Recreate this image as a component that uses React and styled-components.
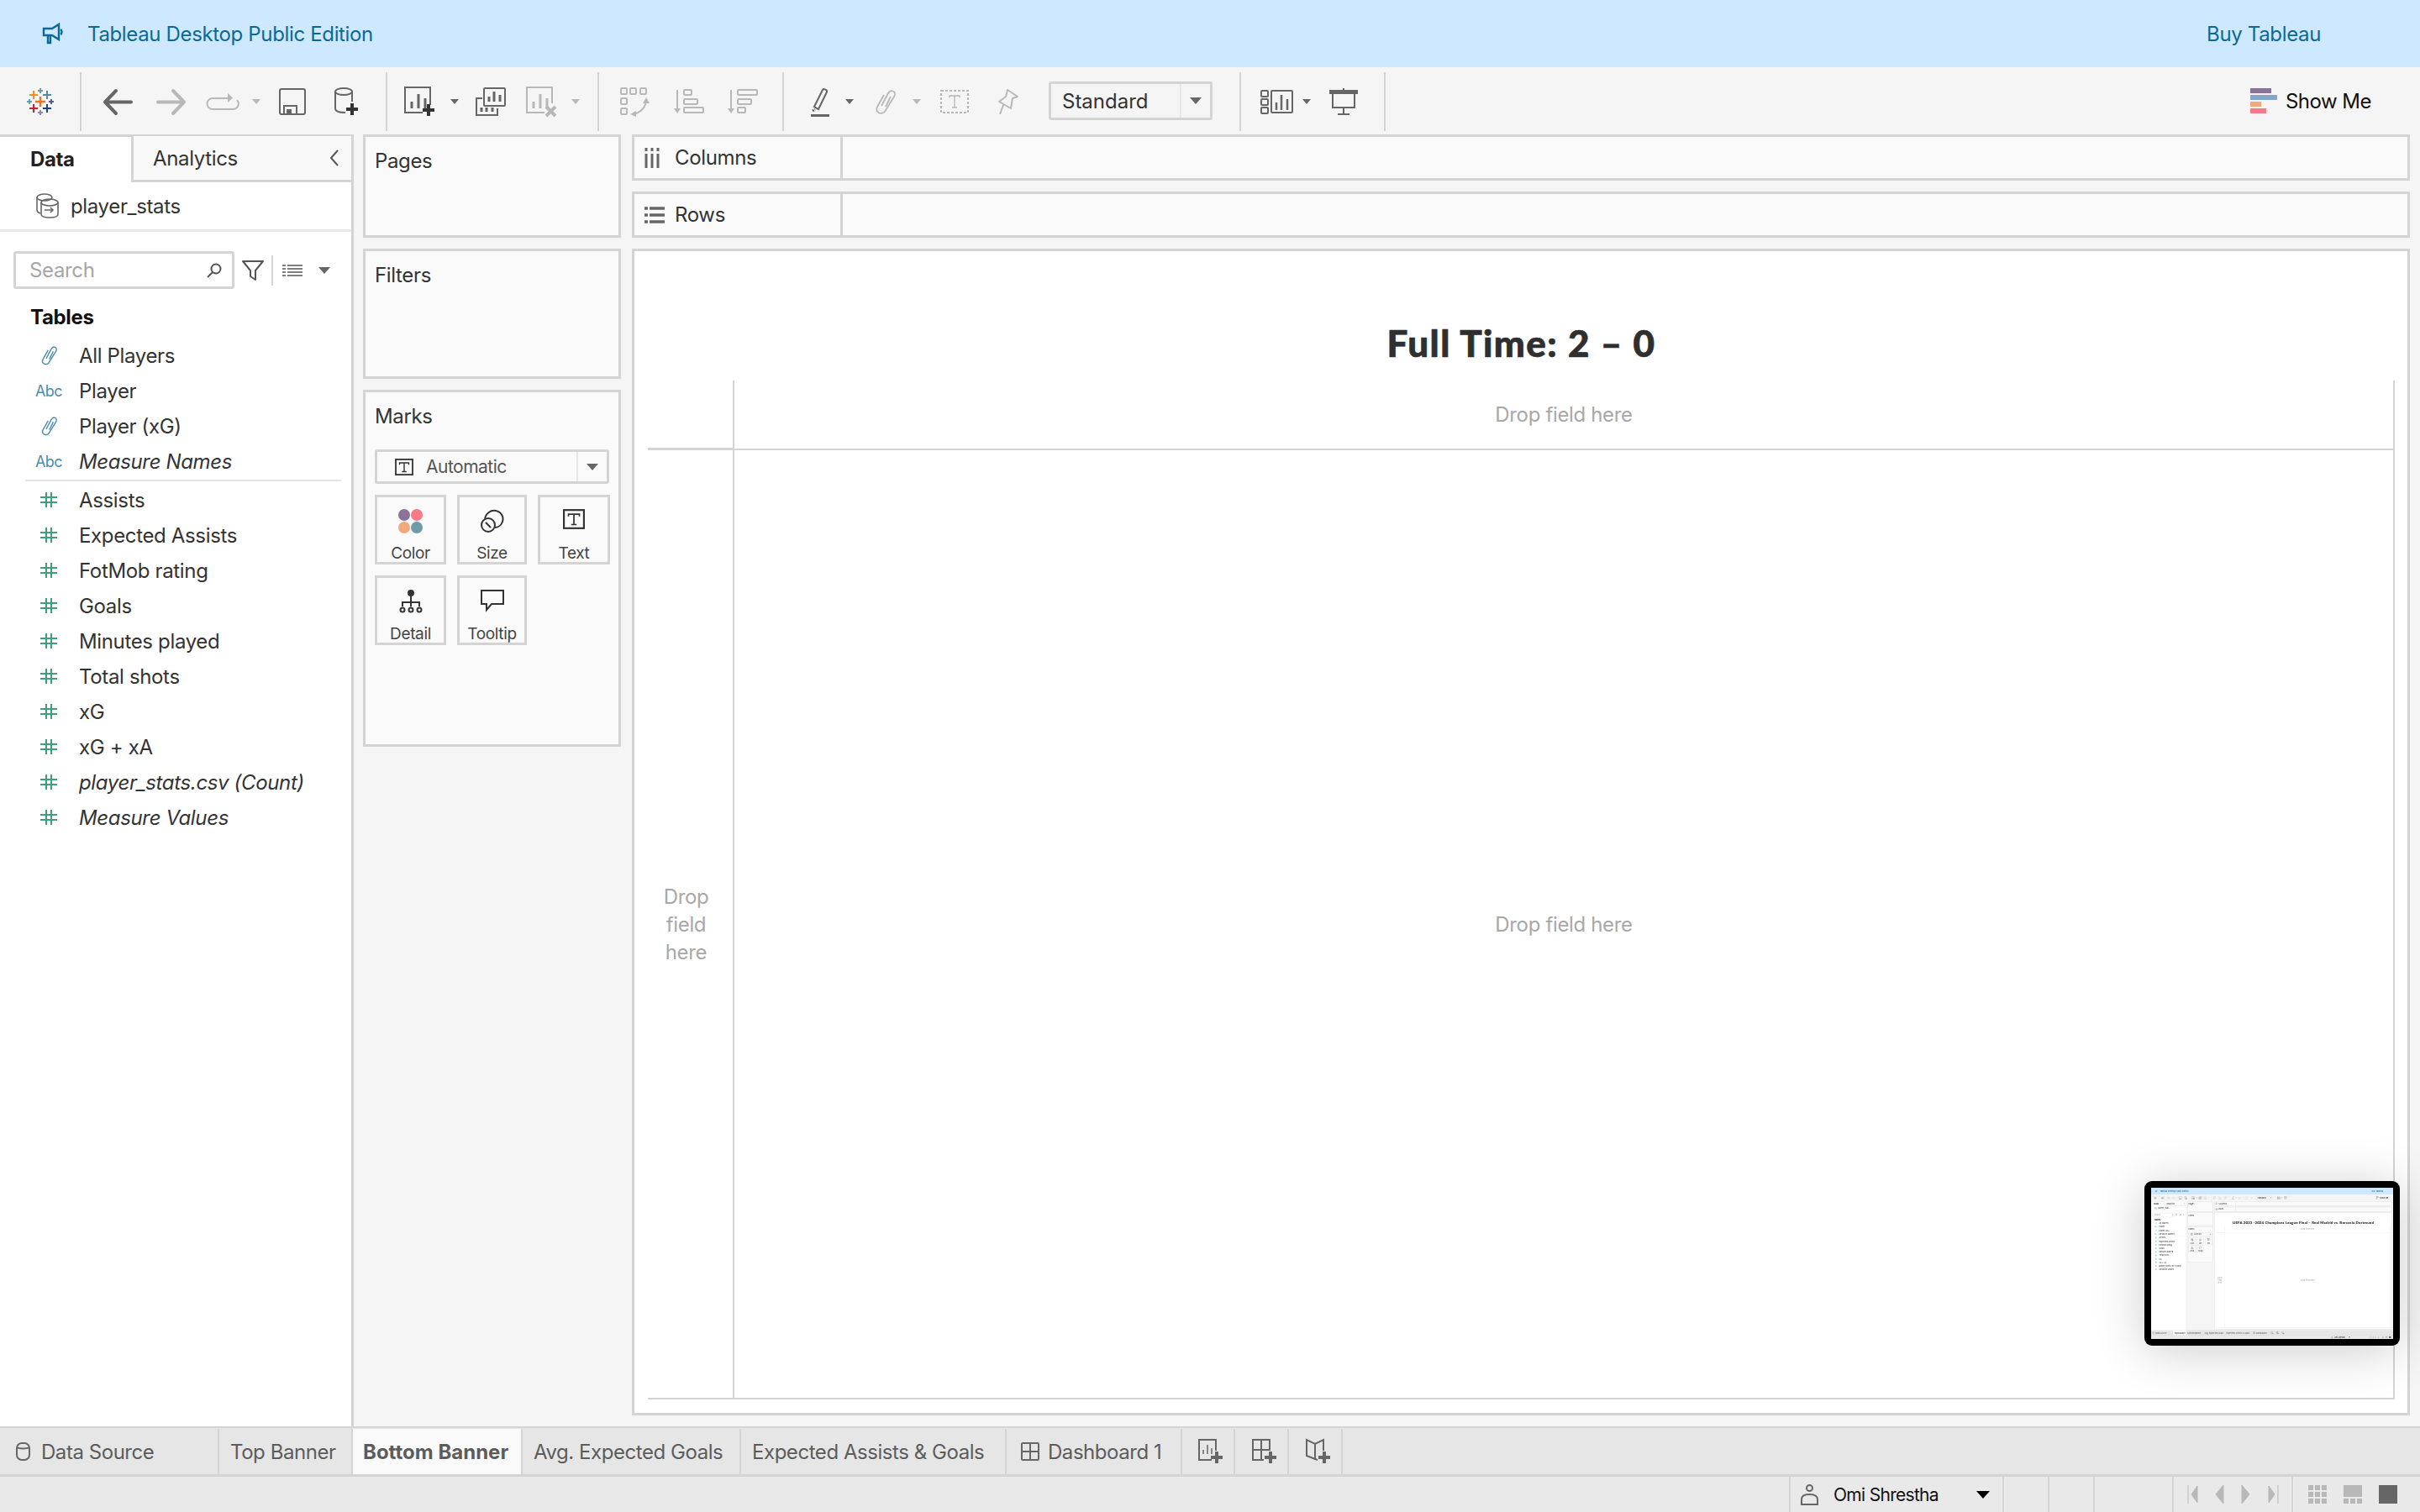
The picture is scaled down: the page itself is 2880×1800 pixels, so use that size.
import styled, { createGlobalStyle } from "styled-components";

const GlobalStyle = createGlobalStyle`
  html, body { margin: 0; padding: 0; background: #f5f5f5; }
  * { box-sizing: border-box; }
`;

const DARK = "#666";
const DIM = "#b8b8b8";
const LINE = "#d4d4d4";

const Page = styled.div`
  position: relative;
  width: 2880px;
  height: 1800px;
  overflow: hidden;
`;
const Screen = styled.div`
  width: 2880px;
  height: 1800px;
  display: flex;
  flex-direction: column;
  background: #f5f5f5;
  font-family: Inter, "Liberation Sans", sans-serif;
  font-size: 24px;
  letter-spacing: -0.35px;
  color: #333;
`;

const Banner = styled.div`
  flex: none;
  height: 80px;
  background: #cde8ff;
  color: #0b6a94;
  font-size: 24px;
  display: flex;
  align-items: center;
  padding: 0 118px 0 50px;
  svg { margin-right: 28px; }
`;
const BuyLink = styled.span`
  margin-left: auto;
`;

const Toolbar = styled.div`
  flex: none;
  height: 80px;
  display: flex;
  align-items: center;
  padding-right: 58px;
`;
const ToolGroup = styled.div`
  flex: none;
  width: ${(p) => p.$w}px;
  height: 70px;
  margin-top: 2px;
  display: flex;
  align-items: center;
  border-right: 2px solid ${LINE};
`;
const Glyph = styled.svg`
  flex: none;
  display: block;
  margin-left: ${(p) => p.$ml || 0}px;
  fill: none;
  stroke: ${(p) => p.$color || DARK};
  overflow: visible;
`;
const Caret = styled.span`
  flex: none;
  width: 0;
  height: 0;
  margin-left: ${(p) => p.$ml || 0}px;
  border-left: ${(p) => p.$size || 5}px solid transparent;
  border-right: ${(p) => p.$size || 5}px solid transparent;
  border-top: ${(p) => (p.$size || 5) + 1}px solid ${(p) => p.$color || DARK};
`;
const Combo = styled.div`
  flex: none;
  width: 195px;
  height: 46px;
  margin-left: 36px;
  margin-top: -2px;
  border: 3px solid ${LINE};
  border-radius: 3px;
  display: flex;
  align-items: center;
  padding-left: 13px;
  font-size: 24px;
  letter-spacing: 0;
  color: #333;
`;
const ComboSplit = styled.div`
  margin-left: auto;
  width: 36px;
  height: 100%;
  border-left: 2px solid #e6e6e6;
  display: flex;
  align-items: center;
  justify-content: center;
`;
const ShowMe = styled.div`
  margin-left: auto;
  display: flex;
  align-items: center;
  gap: 10px;
  color: #111;
  font-size: 24px;
  letter-spacing: -0.5px;
`;
const ShowMeBars = styled.div`
  width: 32px;
  display: flex;
  flex-direction: column;
  gap: 2px;
`;
const ShowMeBar = styled.div`
  height: 6px;
  width: ${(p) => p.$w}px;
  background: ${(p) => p.$c};
`;

const Body = styled.div`
  flex: 1;
  min-height: 0;
  display: flex;
`;

const DataPane = styled.div`
  flex: none;
  width: 421px;
  background: #fff;
  border-right: 3px solid ${LINE};
  border-top: 3px solid ${LINE};
  display: flex;
  flex-direction: column;
`;
const PaneTabs = styled.div`
  display: flex;
  height: 55px;
  margin-top: -1px;
`;
const DataTab = styled.div`
  width: 156px;
  padding-left: 36px;
  display: flex;
  align-items: center;
  font-weight: 700;
  color: #222;
`;
const AnalyticsTab = styled.div`
  flex: 1;
  padding: 0 15px 0 23px;
  display: flex;
  align-items: center;
  justify-content: space-between;
  background: #f9f9f9;
  border-left: 3px solid ${LINE};
  border-bottom: 3px solid ${LINE};
`;
const SourceRow = styled.div`
  height: 59px;
  display: flex;
  align-items: center;
  gap: 13px;
  padding-left: 41px;
  border-bottom: 3px solid #e8e8e8;
`;
const SearchRow = styled.div`
  display: flex;
  align-items: center;
  padding: 23px 0 0 16px;
`;
const SearchBox = styled.div`
  width: 263px;
  height: 45px;
  border: 3px solid ${LINE};
  border-radius: 3px;
  display: flex;
  align-items: center;
  justify-content: space-between;
  padding: 0 12px 0 16px;
  color: #a6a6a6;
`;
const RowDivider = styled.div`
  width: 2px;
  height: 36px;
  margin-left: 9px;
  background: ${LINE};
`;
const TablesHead = styled.div`
  font-weight: 700;
  color: #111;
  padding: 20px 0 0 36px;
  line-height: 28px;
  height: 58px;
`;
const FieldRow = styled.div`
  height: 42px;
  display: flex;
  align-items: center;
  color: #333;
  font-style: ${(p) => (p.$italic ? "italic" : "normal")};
`;
const FieldIcon = styled.div`
  flex: none;
  width: 94px;
  padding-left: 22px;
  display: flex;
  justify-content: center;
`;
const AbcMark = styled.span`
  font-size: 18px;
  letter-spacing: -0.5px;
  color: #4a8dab;
  font-style: normal;
`;
const FieldRule = styled.div`
  height: 2px;
  margin: 1px 12px 1px 30px;
  background: #e4e4e4;
`;

const MiddleCol = styled.div`
  flex: none;
  width: 307px;
  margin-left: 11px;
  display: flex;
  flex-direction: column;
  gap: 13px;
`;
const ShelfCard = styled.div`
  height: ${(p) => p.$h}px;
  flex: none;
  background: #fafafa;
  border: 3px solid ${LINE};
  padding: 13px 11px 11px;
`;
const ShelfLabel = styled.div`
  line-height: 32px;
  color: #333;
`;
const MarkSelect = styled.div`
  height: 41px;
  margin-top: 23px;
  border: 3px solid ${LINE};
  border-radius: 3px;
  display: flex;
  align-items: center;
  padding-left: 21px;
  gap: 15px;
  font-size: 21px;
  letter-spacing: -0.5px;
  color: #555;
`;
const MarkGrid = styled.div`
  display: grid;
  grid-template-columns: 85px 83px 86px;
  grid-auto-rows: 83px;
  gap: 13px;
  margin-top: 13px;
`;
const MarkCard = styled.div`
  border: 3px solid ${LINE};
  display: flex;
  flex-direction: column;
  align-items: center;
  justify-content: space-between;
  padding: 14px 0 0;
  font-size: 19px;
  line-height: 21px;
  color: #444;
`;
const DotGrid = styled.div`
  display: grid;
  grid-template-columns: 14px 14px;
  gap: 1px;
`;
const Dot = styled.div`
  width: 14px;
  height: 14px;
  border-radius: 50%;
  background: ${(p) => p.$c};
`;

const MainCol = styled.div`
  flex: none;
  width: 2116px;
  margin-left: 13px;
  display: flex;
  flex-direction: column;
  gap: 13px;
  padding-bottom: 13px;
`;
const AxisShelf = styled.div`
  flex: none;
  height: 55px;
  display: flex;
  background: #fafafa;
  border: 3px solid ${LINE};
`;
const AxisName = styled.div`
  width: 248px;
  border-right: 3px solid ${LINE};
  display: flex;
  align-items: center;
  gap: 12px;
  padding-left: 12px;
`;
const AxisIcon = styled.div`
  width: 24px;
`;
const Canvas = styled.div`
  flex: 1;
  min-height: 0;
  background: #fff;
  border: 3px solid ${LINE};
  display: flex;
  flex-direction: column;
  padding: 0 15px 16px 16px;
`;
const ViewTitle = styled.div`
  flex: none;
  height: 154px;
  padding-top: 85px;
  text-align: center;
  font-family: Lato, "Liberation Sans", sans-serif;
  font-weight: 900;
  font-size: 44px;
  letter-spacing: 1.4px;
  -webkit-text-stroke: 0.7px #2f2f2f;
  line-height: 48px;
  color: #2f2f2f;
  white-space: nowrap;
`;
const ViewGrid = styled.div`
  flex: 1;
  min-height: 0;
  display: grid;
  grid-template-columns: 101px 1fr;
  grid-template-rows: 83px 1fr;
`;
const CornerCell = styled.div`
  border-bottom: 3px solid ${LINE};
`;
const ColumnCell = styled.div`
  border-left: 2px solid ${LINE};
  border-right: 2px solid ${LINE};
  border-bottom: 2px solid ${LINE};
  display: flex;
  align-items: center;
  justify-content: center;
  color: #a8a8a8;
`;
const RowCell = styled.div`
  border-bottom: 2px solid ${LINE};
  display: flex;
  align-items: center;
  justify-content: center;
  padding-right: 10px;
  color: #a8a8a8;
  text-align: center;
  line-height: 33px;
`;
const PlotCell = styled(ColumnCell)``;

const TabStrip = styled.div`
  flex: none;
  height: 60px;
  display: flex;
  background: #e6e6e6;
  border-top: 2px solid ${LINE};
  border-bottom: 3px solid ${LINE};
  color: #5c5c5c;
`;
const SheetTab = styled.div`
  flex: none;
  width: ${(p) => p.$w}px;
  padding-left: ${(p) => p.$pad}px;
  margin-top: 1px;
  display: flex;
  align-items: center;
  gap: ${(p) => p.$gap || 0}px;
  border-right: 2px solid ${LINE};
  background: ${(p) => (p.$active ? "#fafafa" : "transparent")};
  font-weight: ${(p) => (p.$active ? 700 : 400)};
  font-size: 24px;
  letter-spacing: ${(p) => (p.$active ? "0" : "-0.45px")};
  white-space: nowrap;
`;

const StatusBar = styled.div`
  flex: none;
  height: 42px;
  display: flex;
  justify-content: flex-end;
  background: #e9e9e9;
`;
const StatusCell = styled.div`
  flex: none;
  width: ${(p) => p.$w}px;
  padding-left: ${(p) => p.$pad || 0}px;
  padding-right: ${(p) => p.$padEnd || 0}px;
  display: flex;
  align-items: center;
  gap: ${(p) => p.$gap || 0}px;
  border-left: 2px solid ${LINE};
  font-size: 21px;
  letter-spacing: -0.7px;
  color: #111;
`;
const StatusName = styled.span`
  flex: 1;
`;
const ViewMode = styled.div`
  display: grid;
  grid-template-columns: repeat(3, 6px);
  grid-auto-rows: 6px;
  gap: 2px;
`;
const ViewCell = styled.div`
  background: ${DIM};
  grid-column: ${(p) => (p.$wide ? "1 / 4" : "auto")};
  grid-row: ${(p) => (p.$wide ? "span 2" : "auto")};
`;
const ViewSolid = styled.div`
  width: 22px;
  height: 22px;
  background: #666;
`;

const ThumbFrame = styled.div`
  position: absolute;
  left: 2552px;
  top: 1406px;
  width: 304px;
  height: 196px;
  padding: 8px;
  background: #000;
  border-radius: 9px;
  box-shadow: 0 6px 60px rgba(0, 0, 0, 0.2);
`;
const ThumbScreen = styled.div`
  width: 288px;
  height: 180px;
  overflow: hidden;
  filter: blur(0.35px);
`;
const ThumbScale = styled.div`
  transform: scale(0.1);
  transform-origin: top left;
`;

const Plus = ({ x, y, a, w = 2, c }) => (
  <path d={`M${x - a} ${y}H${x + a}M${x} ${y - a}V${y + a}`} stroke={c} strokeWidth={w} />
);

const TableauLogo = () => (
  <Glyph $ml={32} width="32" height="32" viewBox="0 0 32 32">
    <Plus x={16} y={16} a={6} w={2.4} c="#e8762c" />
    <Plus x={8} y={8} a={5} c="#f28e2b" />
    <Plus x={24} y={8} a={5} c="#5b879b" />
    <Plus x={8} y={24} a={5} c="#c72035" />
    <Plus x={24} y={24} a={5} c="#1f447a" />
    <Plus x={16} y={3} a={3} c="#7099a6" />
    <Plus x={16} y={29} a={3} c="#7e8fb0" />
    <Plus x={3} y={16} a={3} c="#7099a6" />
    <Plus x={29} y={16} a={3} c="#59598c" />
  </Glyph>
);

const BarsIn = ({ c = DARK, d = "M9 26V18M17 26V9M25 26V14" }) => (
  <path d={d} stroke={c} strokeWidth="3" />
);

const PaperclipIcon = ({ color, ml, w = 26, h = 30 }) => (
  <Glyph $ml={ml} $color={color} width={w} height={h} viewBox="0 0 26 30" strokeWidth="1.8">
    <path d="M9 20 17 5c1.4-2.6 4-3.5 6-2.5s2.6 3.5 1.2 6.2L13.5 26c-1.6 2.6-5 3.6-7.5 2.2S2.6 24 4 21.3L12 7" />
    <path d="M14 21 20 9" />
  </Glyph>
);

const HashIcon = () => (
  <Glyph width="20" height="20" viewBox="0 0 20 20" $color="#3f9e7c" strokeWidth="2">
    <path d="M0 7H20M0 13H20M7 1V19M13 1V19" />
  </Glyph>
);

const TBox = ({ ml, size = 24 }) => (
  <Glyph $ml={ml} $color="#333" width={size} height={size - 2} viewBox="0 0 24 22" strokeWidth="2">
    <rect x="1" y="1" width="22" height="20" />
    <path d="M6 8V5.5H18V8M12 5.5V17M9 17H15" strokeWidth="1.6" />
  </Glyph>
);

const FIELDS_TOP = [
  { name: "All Players", kind: "clip" },
  { name: "Player", kind: "abc" },
  { name: "Player (xG)", kind: "clip" },
  { name: "Measure Names", kind: "abc", italic: true },
];
const FIELDS_BOTTOM = [
  { name: "Assists" },
  { name: "Expected Assists" },
  { name: "FotMob rating" },
  { name: "Goals" },
  { name: "Minutes played" },
  { name: "Total shots" },
  { name: "xG" },
  { name: "xG + xA" },
  { name: "player_stats.csv (Count)", italic: true },
  { name: "Measure Values", italic: true },
];

const Field = ({ f }) => (
  <FieldRow $italic={f.italic}>
    <FieldIcon>
      {f.kind === "clip" && <PaperclipIcon color="#4a8dab" w={20} h={24} />}
      {f.kind === "abc" && <AbcMark>Abc</AbcMark>}
      {!f.kind && <HashIcon />}
    </FieldIcon>
    {f.name}
  </FieldRow>
);

const SHEETS = [
  { name: "Top Banner", w: 159, pad: 13 },
  { name: "Bottom Banner", w: 202, pad: 12 },
  { name: "Avg. Expected Goals", w: 260, pad: 13 },
  { name: "Expected Assists & Goals", w: 316, pad: 13 },
];

function Workspace({ title, activeTab }) {
  return (
    <Screen>
      <Banner>
        <Glyph width="26" height="26" viewBox="0 0 26 26" $color="#0b6a94" strokeWidth="2.4">
          <path d="M2 7H12L20 2V20L12 15H2ZM7 15V24H10V15M22 8c2 1 2 5 0 6" />
        </Glyph>
        Tableau Desktop Public Edition
        <BuyLink>Buy Tableau</BuyLink>
      </Banner>

      <Toolbar>
        <ToolGroup $w={97}>
          <TableauLogo />
        </ToolGroup>
        <ToolGroup $w={364}>
          <Glyph $ml={26} width="34" height="31" viewBox="0 0 34 31" strokeWidth="4" strokeLinecap="round" strokeLinejoin="round">
            <path d="M15 2 2 15.5 15 29M2 15.5H33" />
          </Glyph>
          <Glyph $ml={30} $color={DIM} width="34" height="31" viewBox="0 0 34 31" strokeWidth="4" strokeLinecap="round" strokeLinejoin="round">
            <path d="M19 2 32 15.5 19 29M32 15.5H1" />
          </Glyph>
          <Glyph $ml={23} $color={DIM} width="40" height="20" viewBox="0 0 40 20" strokeWidth="2">
            <path d="M28 6H9a6.5 6.5 0 0 0 0 13H33a6.5 6.5 0 0 0 5-11" />
            <path d="M27 0 33 5.5 27 11Z" fill={DIM} stroke="none" />
          </Glyph>
          <Caret $ml={16} $color={DIM} />
          <Glyph $ml={22} width="32" height="32" viewBox="0 0 32 32" strokeWidth="2">
            <rect x="1" y="1" width="30" height="30" rx="2" />
            <path d="M6 31V21H21V31" />
            <rect x="9" y="25" width="6" height="6" fill={DARK} stroke="none" />
          </Glyph>
          <Glyph $ml={34} width="30" height="34" viewBox="0 0 30 34" strokeWidth="2">
            <ellipse cx="11" cy="5" rx="10" ry="4" />
            <path d="M1 5V25C1 29 6 30 13 30M21 5V17" />
            <Plus x={21} y={26} a={7} w={4} c="#333" />
          </Glyph>
        </ToolGroup>
        <ToolGroup $w={252}>
          <Glyph $ml={20} width="37" height="36" viewBox="0 0 37 36" strokeWidth="2">
            <path d="M22 31H1V1H31V22" />
            <BarsIn />
            <Plus x={29} y={28} a={7} w={4} c="#333" />
          </Glyph>
          <Caret $ml={18} />
          <Glyph $ml={20} width="36" height="34" viewBox="0 0 36 34" strokeWidth="2">
            <rect x="10" y="1" width="25" height="21" rx="1" />
            <path d="M8 13H1V33H26V25" />
            <path d="M16 17V11M22 17V5M29 17V9" strokeWidth="3" />
            <path d="M7 29V24M13 29V24M20 29V24" strokeWidth="3" />
          </Glyph>
          <Glyph $ml={24} $color={DIM} width="37" height="36" viewBox="0 0 37 36" strokeWidth="2">
            <path d="M22 31H1V1H31V20" />
            <BarsIn c={DIM} />
            <path d="M24 24 35 35M35 24 24 35" strokeWidth="4" />
          </Glyph>
          <Caret $ml={17} $color={DIM} />
        </ToolGroup>
        <ToolGroup $w={220}>
          <Glyph $ml={25} $color={DIM} width="35" height="35" viewBox="0 0 35 35" strokeWidth="2">
            <rect x="1" y="1" width="7" height="7" rx="1" />
            <rect x="12" y="1" width="7" height="7" rx="1" />
            <rect x="24" y="1" width="7" height="7" rx="1" />
            <rect x="1" y="13" width="7" height="7" rx="1" />
            <rect x="1" y="25" width="7" height="7" rx="1" />
            <path d="M31 14C31 23 25 30 16 32" />
            <path d="M31 12 35 19H27ZM12 32 19 28V35Z" fill={DIM} stroke="none" />
          </Glyph>
          <Glyph $ml={29} $color={DIM} width="36" height="30" viewBox="0 0 36 30" strokeWidth="2">
            <path d="M4 1V24" />
            <path d="M0 23H8L4 29Z" fill={DIM} stroke="none" />
            <rect x="12" y="1" width="9" height="6" rx="1" />
            <rect x="12" y="12" width="16" height="6" rx="1" />
            <rect x="12" y="22" width="23" height="6" rx="1" />
          </Glyph>
          <Glyph $ml={28} $color={DIM} width="36" height="30" viewBox="0 0 36 30" strokeWidth="2">
            <path d="M4 1V24" />
            <path d="M0 23H8L4 29Z" fill={DIM} stroke="none" />
            <rect x="12" y="1" width="23" height="6" rx="1" />
            <rect x="12" y="12" width="16" height="6" rx="1" />
            <rect x="12" y="22" width="9" height="6" rx="1" />
          </Glyph>
        </ToolGroup>
        <ToolGroup $w={544}>
          <Glyph $ml={32} width="22" height="35" viewBox="0 0 22 35" strokeWidth="2">
            <path d="M4 23 14 3c1-2 6 0 5 2.500L9 26Z" />
            <path d="M2 28 5 26" strokeWidth="3" strokeDasharray="2 1" />
            <path d="M0 33.500H22" strokeWidth="3" />
          </Glyph>
          <Caret $ml={19} />
          <PaperclipIcon ml={24} color={DIM} />
          <Caret $ml={20} $color={DIM} />
          <Glyph $ml={23} $color={DIM} width="34" height="28" viewBox="0 0 34 28" strokeWidth="2">
            <rect x="1" y="1" width="32" height="26" strokeDasharray="3 2" />
            <path d="M11 9V7H23V9M17 7V21M14 21H20" strokeWidth="1.4" />
          </Glyph>
          <Glyph $ml={34} $color={DIM} width="25" height="31" viewBox="0 0 25 31" strokeWidth="2">
            <path d="M12 1 24 9 18 11 16 23 2 15 10 9ZM7 19 3 30" strokeLinejoin="round" />
          </Glyph>
          <Combo>
            Standard
            <ComboSplit>
              <Caret $size={7} />
            </ComboSplit>
          </Combo>
        </ToolGroup>
        <ToolGroup $w={172}>
          <Glyph $ml={23} width="39" height="28" viewBox="0 0 39 28" strokeWidth="2">
            <rect x="1" y="1" width="8" height="7" rx="1" />
            <rect x="1" y="11" width="8" height="7" rx="1" />
            <rect x="1" y="21" width="8" height="7" rx="1" />
            <rect x="13" y="1" width="25" height="26" rx="1" />
            <path d="M19 24V15M25 24V6M32 24V11" strokeWidth="2.500" />
          </Glyph>
          <Caret $ml={11} />
          <Glyph $ml={22} width="34" height="32" viewBox="0 0 34 32" strokeWidth="2">
            <path d="M0 4.500H34" strokeWidth="5" />
            <path d="M17 0V2M4 6V23H30V6M17 23V31M10 31H24" />
          </Glyph>
        </ToolGroup>
        <ShowMe>
          <ShowMeBars>
            <ShowMeBar $w={25} $c="#8a7299" />
            <ShowMeBar $w={32} $c="#86a5cb" />
            <ShowMeBar $w={13} $c="#f2a97e" />
            <ShowMeBar $w={19} $c="#f97a87" />
          </ShowMeBars>
          Show Me
        </ShowMe>
      </Toolbar>

      <Body>
        <DataPane>
          <PaneTabs>
            <DataTab>Data</DataTab>
            <AnalyticsTab>
              Analytics
              <Glyph width="10" height="20" viewBox="0 0 10 20" strokeWidth="2" $color="#555">
                <path d="M9 1 1 10 9 19" />
              </Glyph>
            </AnalyticsTab>
          </PaneTabs>
          <SourceRow>
            <Glyph width="30" height="30" viewBox="0 0 30 30" strokeWidth="1.6">
              <ellipse cx="12" cy="5" rx="9" ry="4" />
              <path d="M3 5V20C3 22 4 23 7 24" />
              <ellipse cx="18" cy="11" rx="10" ry="4" />
              <path d="M8 11V25C8 28 12 29 18 29S28 28 28 25V11" />
              <path d="M12 20H22M19 17 22 20 19 23" />
            </Glyph>
            player_stats
          </SourceRow>
          <SearchRow>
            <SearchBox>
              Search
              <Glyph width="18" height="18" viewBox="0 0 18 18" strokeWidth="2" $color="#555">
                <circle cx="11" cy="7" r="5.500" />
                <path d="M7 11 1 17" />
              </Glyph>
            </SearchBox>
            <Glyph $ml={9} width="26" height="26" viewBox="0 0 26 26" strokeWidth="2" $color="#555">
              <path d="M1 2H25L16 13V24L10 20V13Z" strokeLinejoin="round" />
            </Glyph>
            <RowDivider />
            <Glyph $ml={11} width="24" height="14" viewBox="0 0 24 14" strokeWidth="1.5" $color="#555">
              <path d="M0 1H4M6 1H24M0 5H4M6 5H24M0 9H4M6 9H24M0 13H4M6 13H24" />
            </Glyph>
            <Caret $ml={19} $size={7} />
          </SearchRow>
          <TablesHead>Tables</TablesHead>
          {FIELDS_TOP.map((f) => (
            <Field key={f.name} f={f} />
          ))}
          <FieldRule />
          {FIELDS_BOTTOM.map((f) => (
            <Field key={f.name} f={f} />
          ))}
        </DataPane>

        <MiddleCol>
          <ShelfCard $h={123}>
            <ShelfLabel>Pages</ShelfLabel>
          </ShelfCard>
          <ShelfCard $h={155}>
            <ShelfLabel>Filters</ShelfLabel>
          </ShelfCard>
          <ShelfCard $h={425}>
            <ShelfLabel>Marks</ShelfLabel>
            <MarkSelect>
              <TBox size={22} />
              Automatic
              <ComboSplit>
                <Caret $size={7} />
              </ComboSplit>
            </MarkSelect>
            <MarkGrid>
              <MarkCard>
                <DotGrid>
                  <Dot $c="#8a7299" />
                  <Dot $c="#f97a87" />
                  <Dot $c="#f2a97e" />
                  <Dot $c="#6f9aa8" />
                </DotGrid>
                Color
              </MarkCard>
              <MarkCard>
                <Glyph width="28" height="28" viewBox="0 0 28 28" strokeWidth="2" $color="#333">
                  <circle cx="9" cy="19" r="8" />
                  <path d="M6 16 12 22M5 12C6 5 12 1 18 2S28 9 26 15 19 22 17 22" />
                </Glyph>
                Size
              </MarkCard>
              <MarkCard>
                <TBox size={26} />
                Text
              </MarkCard>
              <MarkCard>
                <Glyph width="26" height="28" viewBox="0 0 26 28" strokeWidth="2" $color="#333">
                  <circle cx="13" cy="4" r="4" fill="#333" stroke="none" />
                  <path d="M13 8V20M3 20V15H23V20" />
                  <circle cx="3" cy="24" r="2.500" />
                  <circle cx="13" cy="24" r="2.500" />
                  <circle cx="23" cy="24" r="2.500" />
                </Glyph>
                Detail
              </MarkCard>
              <MarkCard>
                <Glyph width="28" height="26" viewBox="0 0 28 26" strokeWidth="2" $color="#333">
                  <path d="M1 1H27V17H13L7 24V17H1Z" />
                </Glyph>
                Tooltip
              </MarkCard>
            </MarkGrid>
          </ShelfCard>
        </MiddleCol>

        <MainCol>
          <AxisShelf>
            <AxisName>
              <AxisIcon>
                <Glyph width="18" height="24" viewBox="0 0 18 24" strokeWidth="3">
                  <path d="M2 0V4M2 7V24M9 0V4M9 7V24M16 0V4M16 7V24" />
                </Glyph>
              </AxisIcon>
              Columns
            </AxisName>
          </AxisShelf>
          <AxisShelf>
            <AxisName>
              <AxisIcon>
                <Glyph width="24" height="20" viewBox="0 0 24 20" strokeWidth="3.500">
                  <path d="M0 2H4M6 2H24M0 10H4M6 10H24M0 18H4M6 18H24" />
                </Glyph>
              </AxisIcon>
              Rows
            </AxisName>
          </AxisShelf>
          <Canvas>
            <ViewTitle>{title}</ViewTitle>
            <ViewGrid>
              <CornerCell />
              <ColumnCell>Drop field here</ColumnCell>
              <RowCell>
                Drop
                <br />
                field
                <br />
                here
              </RowCell>
              <PlotCell>Drop field here</PlotCell>
            </ViewGrid>
          </Canvas>
        </MainCol>
      </Body>

      <TabStrip>
        <SheetTab $w={261} $pad={19} $gap={13}>
          <Glyph width="17" height="22" viewBox="0 0 17 22" strokeWidth="2">
            <rect x="1" y="1" width="15" height="20" rx="6" />
            <path d="M1 6C4 8 13 8 16 6" />
          </Glyph>
          Data Source
        </SheetTab>
        {SHEETS.map((s) => (
          <SheetTab key={s.name} $w={s.w} $pad={s.pad} $active={s.name === activeTab}>
            {s.name}
          </SheetTab>
        ))}
        <SheetTab $w={209} $pad={17} $gap={10}>
          <Glyph width="22" height="22" viewBox="0 0 22 22" strokeWidth="2">
            <rect x="1" y="1" width="20" height="20" rx="1" />
            <path d="M11 1V21M1 11H21" />
          </Glyph>
          Dashboard 1
        </SheetTab>
        <SheetTab $w={63} $pad={19}>
          <Glyph width="30" height="30" viewBox="0 0 30 30" strokeWidth="2">
            <path d="M16 25H1V1H21V14" />
            <path d="M6 18V13M11 18V7M16 18V11" strokeWidth="1.500" />
            <Plus x={22} y={22} a={7} w={4} c="#666" />
          </Glyph>
        </SheetTab>
        <SheetTab $w={64} $pad={20}>
          <Glyph width="30" height="30" viewBox="0 0 30 30" strokeWidth="2">
            <path d="M14 25H1V1H21V14M11 1V25M1 13H21" />
            <Plus x={22} y={22} a={7} w={4} c="#666" />
          </Glyph>
        </SheetTab>
        <SheetTab $w={64} $pad={20}>
          <Glyph width="30" height="30" viewBox="0 0 30 30" strokeWidth="2">
            <path d="M14 25 1 20V1L11 6 21 1V14M11 6V25" />
            <Plus x={22} y={22} a={7} w={4} c="#666" />
          </Glyph>
        </SheetTab>
      </TabStrip>

      <StatusBar>
        <StatusCell $w={254} $pad={12} $padEnd={15} $gap={18}>
          <Glyph width="21" height="25" viewBox="0 0 21 25" strokeWidth="2">
            <circle cx="10.500" cy="4.500" r="3.500" />
            <path d="M1 24V18C1 14 4 12 10 12C16 12 20 14 20 18V24Z" />
          </Glyph>
          <StatusName>Omi Shrestha</StatusName>
          <Caret $size={8} $color="#000" />
        </StatusCell>
        <StatusCell $w={54} />
        <StatusCell $w={54} />
        <StatusCell $w={94} />
        <StatusCell $w={142} $pad={16}>
          <Glyph width="110" height="22" viewBox="0 0 110 22" $color={DIM} strokeWidth="1">
            <path d="M1 0V22M12 1 5 11 12 21ZM43 0 34 11 43 22ZM65 0 74 11 65 22ZM97 1 104 11 97 21ZM108 0V22" fill={DIM} />
          </Glyph>
        </StatusCell>
        <StatusCell $w={153} $pad={18} $gap={20}>
          <ViewMode>
            {Array.from({ length: 9 }, (_, i) => (
              <ViewCell key={i} />
            ))}
          </ViewMode>
          <ViewMode>
            <ViewCell $wide />
            <ViewCell />
            <ViewCell />
            <ViewCell />
          </ViewMode>
          <ViewSolid />
        </StatusCell>
      </StatusBar>
    </Screen>
  );
}

export default function App() {
  return (
    <Page>
      <GlobalStyle />
      <Workspace title="Full Time: 2 – 0" activeTab="Bottom Banner" />
      <ThumbFrame>
        <ThumbScreen>
          <ThumbScale>
            <Workspace
              title="UEFA 2023 -2024 Champions League Final – Real Madrid vs. Borussia Dortmund"
              activeTab="Top Banner"
            />
          </ThumbScale>
        </ThumbScreen>
      </ThumbFrame>
    </Page>
  );
}
